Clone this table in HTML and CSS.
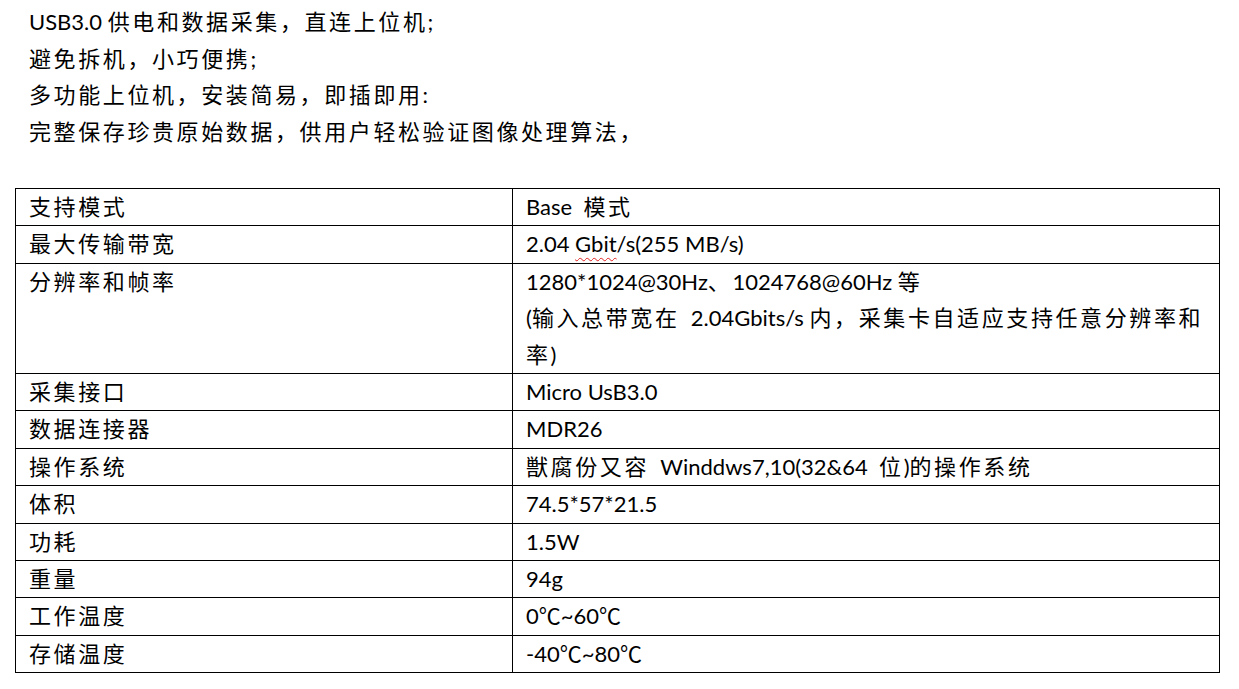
FILE: index.html
```html
<!DOCTYPE html>
<html lang="zh-CN">
<head>
<meta charset="utf-8">
<title>USB3.0 采集卡</title>
<link rel="stylesheet" href="styles.css">
</head>
<body>
<div class="intro">
  <p>USB3.0 <span class="c">供电和数据采集，直连上位机</span>;</p>
  <p><span class="c">避免拆机，小巧便携</span>;</p>
  <p><span class="c">多功能上位机，安装简易，即插即用</span>:</p>
  <p><span class="c">完整保存珍贵原始数据，供用户轻松验证图像处理算法，</span></p>
</div>
<table class="spec">
  <tr><td class="k"><span class="c">支持模式</span></td><td class="v">Base&nbsp; <span class="c">模式</span></td></tr>
  <tr><td class="k"><span class="c">最大传输带宽</span></td><td class="v">2.04 <span class="spell">Gbit</span>/s(255 MB/s)</td></tr>
  <tr><td class="k"><span class="c">分辨率和帧率</span></td><td class="v">1280*1024@30Hz<span class="c">、</span>1024768@60Hz <span class="c">等</span><br>(<span class="c">输入总带宽在</span>&nbsp; 2.04Gbits/s <span class="c">内，采集卡自适应支持任意分辨率和</span><br><span class="c">率</span>)</td></tr>
  <tr><td class="k"><span class="c">采集接口</span></td><td class="v">Micro UsB3.0</td></tr>
  <tr><td class="k"><span class="c">数据连接器</span></td><td class="v">MDR26</td></tr>
  <tr><td class="k"><span class="c">操作系统</span></td><td class="v"><span class="c">獣腐份又容</span>&nbsp; Winddws7,10(32&amp;64&nbsp; <span class="c">位</span>)<span class="c">的操作系统</span></td></tr>
  <tr><td class="k"><span class="c">体积</span></td><td class="v">74.5*57*21.5</td></tr>
  <tr><td class="k"><span class="c">功耗</span></td><td class="v">1.5W</td></tr>
  <tr><td class="k"><span class="c">重量</span></td><td class="v">94g</td></tr>
  <tr><td class="k"><span class="c">工作温度</span></td><td class="v">0<span class="c deg">℃</span>~60<span class="c deg">℃</span></td></tr>
  <tr><td class="k"><span class="c">存储温度</span></td><td class="v">-40<span class="c deg">℃</span>~80<span class="c deg">℃</span></td></tr>
</table>
</body>
</html>
```
FILE: styles.css
```css
html, body {
  margin: 0;
  padding: 0;
  background: #fff;
}
body {
  font-family: "Lato", "Noto Sans CJK SC", sans-serif;
  font-size: 22px;
  color: #000;
  width: 1239px;
}
.c {
  font-family: "Noto Sans CJK SC", sans-serif;
  font-size: 22px;
  line-height: 1;
  letter-spacing: 2.6px;
}
.deg {
  letter-spacing: 0;
}
.intro {
  padding: 4px 0 0 29px;
}
.intro p {
  margin: 0;
  line-height: 36.5px;
  white-space: nowrap;
}
.spec {
  margin: 38px 0 0 15px;
  border-collapse: collapse;
  width: 1205px;
  table-layout: fixed;
}
.spec td {
  border: 1px solid #000;
  padding: 0 0 0 13px;
  line-height: 36.4px;
  vertical-align: top;
  white-space: nowrap;
}
.spec td.k {
  width: 483px;
}
.spell {
  text-decoration: underline wavy #e02020;
  text-decoration-thickness: 1px;
  text-underline-offset: 5px;
}
```
